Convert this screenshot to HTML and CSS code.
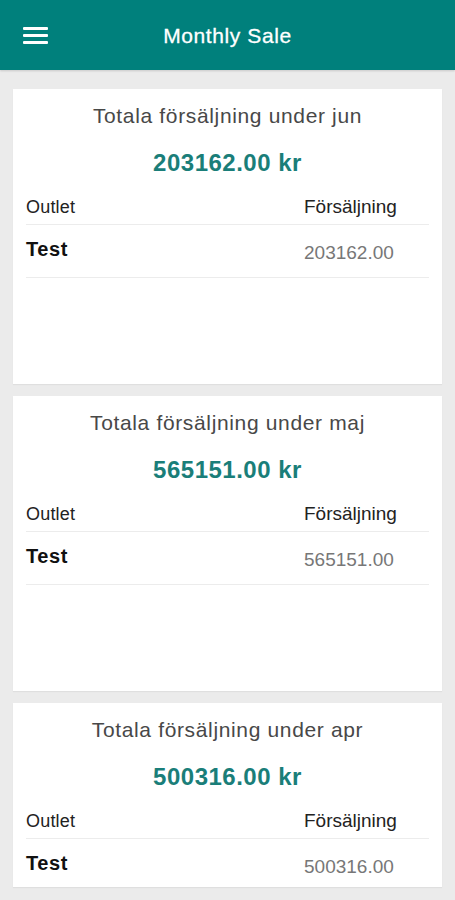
FILE: index.html
```html
<!DOCTYPE html>
<html lang="sv">
<head>
    <meta charset="UTF-8">
    <meta name="viewport" content="width=device-width, initial-scale=1.0">
    <title>Monthly Sale</title>
    <link rel="stylesheet" href="styles.css">
</head>
<body>

<header class="topbar">
    <button class="menu-button" aria-label="Menu">
        <svg width="26" height="20" viewBox="0 0 26 20">
            <rect x="0" y="3" width="25" height="3" rx="1" fill="#fff"/>
            <rect x="0" y="10" width="25" height="3" rx="1" fill="#fff"/>
            <rect x="0" y="17" width="25" height="3" rx="1" fill="#fff"/>
        </svg>
    </button>
    <h1 class="topbar-title">Monthly Sale</h1>
</header>

<main class="content">
    <section class="card">
        <h2 class="card-title">Totala försäljning under jun</h2>
        <div class="card-total">203162.00 kr</div>
        <div class="sale-table">
            <div class="sale-row sale-head">
                <span>Outlet</span>
                <span>Försäljning</span>
            </div>
            <div class="sale-row">
                <span class="outlet">Test</span>
                <span class="amount">203162.00</span>
            </div>
        </div>
    </section>

    <section class="card">
        <h2 class="card-title">Totala försäljning under maj</h2>
        <div class="card-total">565151.00 kr</div>
        <div class="sale-table">
            <div class="sale-row sale-head">
                <span>Outlet</span>
                <span>Försäljning</span>
            </div>
            <div class="sale-row">
                <span class="outlet">Test</span>
                <span class="amount">565151.00</span>
            </div>
        </div>
    </section>

    <section class="card card-cut">
        <h2 class="card-title">Totala försäljning under apr</h2>
        <div class="card-total">500316.00 kr</div>
        <div class="sale-table">
            <div class="sale-row sale-head">
                <span>Outlet</span>
                <span>Försäljning</span>
            </div>
            <div class="sale-row">
                <span class="outlet">Test</span>
                <span class="amount">500316.00</span>
            </div>
        </div>
    </section>
</main>

</body>
</html>
```

FILE: styles.css
```css
body {
    font-family: "Liberation Sans", Arial, sans-serif;
    background-color: #ebebeb;
    margin: 0;
    height: 900px;
    overflow: hidden;
}
.topbar {
    height: 70px;
    background-color: #00807c;
    display: flex;
    align-items: center;
    box-shadow: 0 1px 2px rgba(0, 0, 0, 0.15);
}
.menu-button {
    background: none;
    border: none;
    padding: 0;
    margin-left: 23px;
    margin-top: -3px;
    width: 26px;
    height: 20px;
    display: flex;
}
.topbar-title {
    flex: 1;
    margin: 0;
    padding-right: 49px;
    padding-top: 2px;
    text-align: center;
    color: #fff;
    font-size: 21px;
    font-weight: normal;
    letter-spacing: 0.6px;
    -webkit-text-stroke: 0.3px #fff;
}
.content {
    padding: 19px 13px 0;
    display: flex;
    flex-direction: column;
    gap: 12px;
}
.card {
    background-color: #fff;
    min-height: 295px;
    box-sizing: border-box;
    padding: 14px 13px 0;
    box-shadow: 0 1px 1px rgba(0, 0, 0, 0.05);
}
.card-cut {
    min-height: 0;
    height: 184px;
    overflow: hidden;
}
.card-title {
    margin: 0;
    text-align: center;
    font-size: 21px;
    line-height: 25px;
    font-weight: normal;
    color: #484848;
    letter-spacing: 0.65px;
}
.card-total {
    margin-top: 21px;
    text-align: center;
    font-size: 24px;
    line-height: 28px;
    font-weight: bold;
    color: #1a7e79;
    letter-spacing: 0.5px;
}
.sale-table {
    margin-top: 19px;
}
.sale-row {
    display: grid;
    grid-template-columns: 278px 1fr;
    align-items: center;
    border-bottom: 1px solid #ececec;
    padding: 12px 0 13px;
    font-size: 19px;
    line-height: 22px;
}
.sale-head {
    padding: 0 0 6px;
    font-size: 18px;
    color: #222;
    letter-spacing: 0.2px;
}
.sale-head span:last-child {
    font-size: 19px;
    letter-spacing: 0;
}
.outlet {
    font-weight: bold;
    font-size: 20px;
    color: #111;
    letter-spacing: 0.6px;
    padding-bottom: 4px;
}
.amount {
    color: #777;
    padding-top: 5px;
}
```
